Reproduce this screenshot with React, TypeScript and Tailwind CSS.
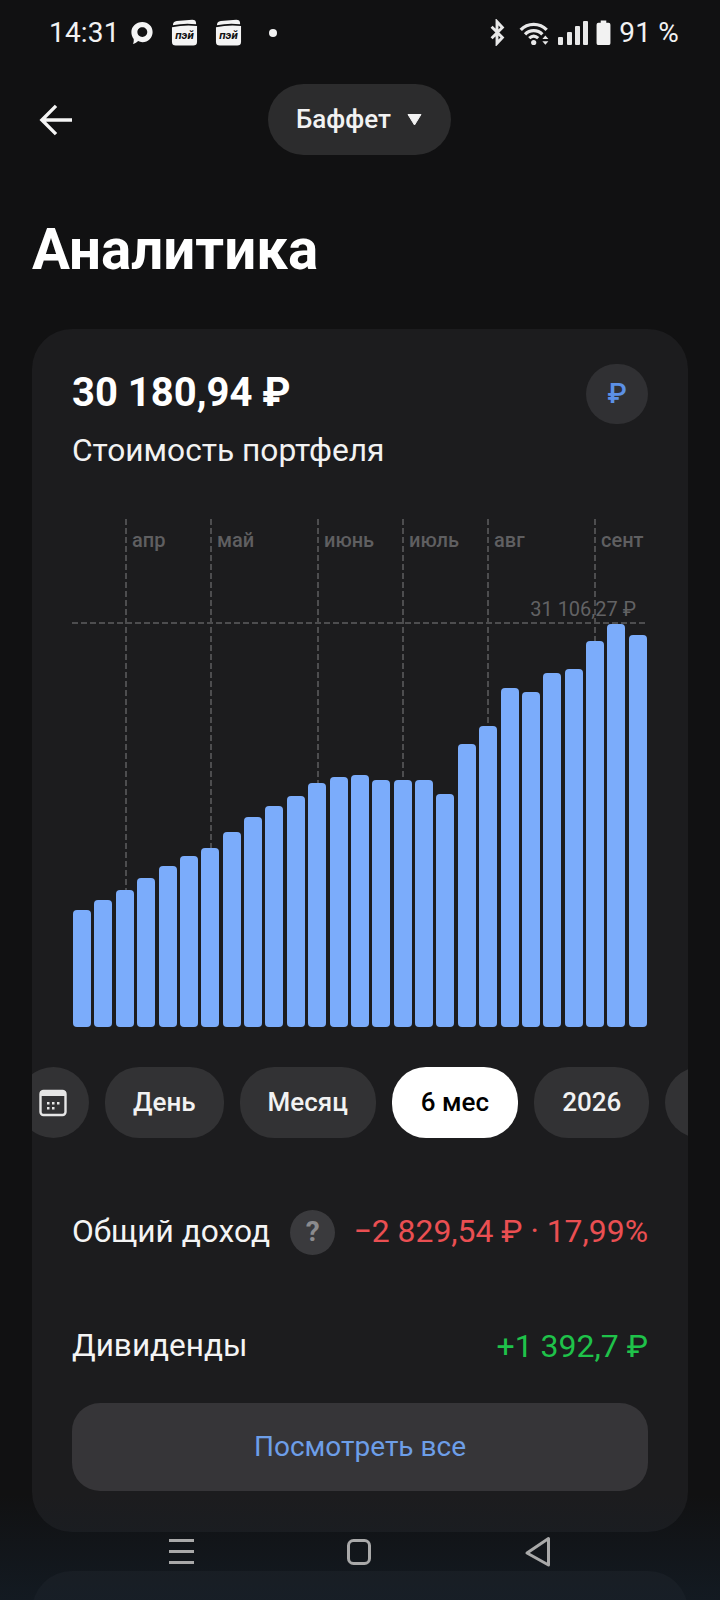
import React from "react";

const tops = [870,840,808,774,738,706,683,636,591,557,528,487,471,464,480,480,480,520,370,318,203,214,158,145,63,10,45];
const vlines = [
  { x: 53, label: "апр" },
  { x: 138, label: "май" },
  { x: 245, label: "июнь" },
  { x: 330, label: "июль" },
  { x: 415, label: "авг" },
  { x: 522, label: "сент" },
];

function Pei() {
  return (
    <svg width="27" height="27" viewBox="0 0 28 27" className="block">
      <path d="M2 6 Q2 2 6 1.600 L22 0.400 Q26 0.400 26 4 L26 5 Q14 3.500 2 6Z" fill="#f4f4f4" />
      <path d="M1 8 Q14 5.500 27 6.800 L27 23 Q27 27 23 27 L5 27 Q1 27 1 23Z" fill="#f4f4f4" />
      <text x="14" y="20" textAnchor="middle" fontSize="12" fontWeight="700" fontStyle="italic" fill="#111" fontFamily="Roboto, sans-serif">пэй</text>
    </svg>
  );
}

function StatusBar() {
  return (
    <div className="flex h-[64px] items-center justify-between pl-[49px] pr-[41px] pt-[1px] text-[#f2f2f2]">
      <div className="flex items-center">
        <span className="text-[28px] font-normal leading-none tracking-[0.2px]">14:31</span>
        <svg width="24" height="24" viewBox="0 0 25 26" className="ml-[10px]">
          <path fillRule="evenodd" fill="#f4f4f4" d="M12.800 1C19.200 1 24 5.700 24 11.900 24 18.200 19.200 23 13 23c-1.900 0-3.400-.4-4.700-1.200-.9.900-3.400 2.800-5.700 3 .9-1.300 1.100-3.300.9-5.300C1.900 17.500 1 14.900 1 12 1 5.700 6.200 1 12.800 1ZM12.800 6.700c-3 0-5.300 2.300-5.300 5.200 0 3 2.300 5.300 5.400 5.300 3 0 5.300-2.300 5.300-5.300 0-2.900-2.400-5.200-5.400-5.200Z" />
        </svg>
        <span className="ml-[17px]"><Pei /></span>
        <span className="ml-[17px]"><Pei /></span>
        <span className="ml-[27px] h-[8px] w-[8px] rounded-full bg-[#f2f2f2]" />
      </div>
      <div className="flex items-center">
        <svg width="16" height="27" viewBox="0 0 16 30" fill="none" stroke="#e8e8e8" strokeWidth="3.200">
          <path d="M2 8.500 L14 20.500 L8 27 L8 3 L14 9.500 L2 21.500" />
        </svg>
        <svg width="32" height="26" viewBox="0 0 37 30" className="ml-[14px]">
          <path d="M2 11.500 C10 3 24 3 32 11.500" fill="none" stroke="#e8e8e8" strokeWidth="3.800" />
          <path d="M7 16.500 C12.500 11 21.500 11 27 16.500" fill="none" stroke="#e8e8e8" strokeWidth="3.800" />
          <path d="M11.800 21 C15 18 19 18 22.200 21" fill="none" stroke="#e8e8e8" strokeWidth="3.600" />
          <circle cx="17" cy="26" r="3" fill="#e8e8e8" />
          <path d="M27 22 L30.500 18 L34 22Z M27 24.500 L34 24.500 L30.500 28.500Z" fill="#e8e8e8" />
        </svg>
        <div className="ml-[7px] flex h-[24px] items-end gap-[3.300px]">
          <span className="h-[8px] w-[5px] rounded-[1px] bg-[#e8e8e8]" />
          <span className="h-[13px] w-[5px] rounded-[1px] bg-[#e8e8e8]" />
          <span className="h-[19px] w-[5px] rounded-[1px] bg-[#e8e8e8]" />
          <span className="h-[24px] w-[5px] rounded-[1px] bg-[#e8e8e8]" />
        </div>
        <svg width="15" height="25" viewBox="0 0 15 27" className="ml-[8px]">
          <path d="M4.500 0.500h6v2.500h2.500q2 0 2 2v20q0 2-2 2h-11q-2 0-2-2v-20q0-2 2-2h2.500Z" fill="#f2f2f2" />
        </svg>
        <span className="ml-[8px] text-[28px] leading-none tracking-[0.2px]">91 %</span>
      </div>
    </div>
  );
}

function Pill({ children, active }: { children: React.ReactNode; active?: boolean }) {
  return (
    <div
      className={
        active
          ? "flex h-[71px] shrink-0 items-center rounded-[34px] bg-white px-[29px] text-[26px] font-medium text-black"
          : "flex h-[71px] shrink-0 items-center rounded-[34px] bg-[#323234] px-[28px] text-[26px] font-medium text-[#f2f2f2]"
      }
    >
      {children}
    </div>
  );
}

export default function App() {
  return (
    <div className="relative h-[1600px] w-[720px] overflow-hidden bg-[#111112] font-['Roboto',sans-serif] text-white">
      <StatusBar />

      <div className="relative mt-[20px] flex h-[71px] items-center justify-center pr-[2px]">
        <svg width="34" height="32" viewBox="0 0 36 34" className="absolute left-[39px] top-[20px]" fill="none" stroke="#f5f5f5" strokeWidth="3.600">
          <path d="M35 17 H3 M18 2 L3 17 L18 32" />
        </svg>
        <div className="flex h-[71px] w-[183px] items-center justify-center rounded-[36px] bg-[#2c2c2d]">
          <span className="text-[26px] font-medium text-[#f2f2f2]">Баффет</span>
          <svg width="15" height="13" viewBox="0 0 15 13" className="ml-[16px]">
            <path d="M1 1.500 H14 L7.500 12Z" fill="#f2f2f2" stroke="#f2f2f2" strokeLinejoin="round" />
          </svg>
        </div>
      </div>

      <h1 className="mt-[62px] pl-[32px] text-[56.500px] font-bold leading-[66px] text-white">Аналитика</h1>

      <section className="mx-[32px] mt-[46px] h-[1203px] overflow-hidden rounded-[40px] bg-[#1c1c1e] pt-[35px]">
        <div className="flex items-start justify-between px-[40px]">
          <div>
            <div className="flex h-[58px] items-center text-[40px] font-bold leading-none">30 180,94 ₽</div>
            <div className="mt-[11px] text-[31.700px] leading-[36px] text-[#f2f2f2]">Стоимость портфеля</div>
          </div>
          <div className="flex h-[60px] w-[62px] items-center justify-center rounded-full bg-[#303033] text-[28px] font-medium text-[#5c90e6]">₽</div>
        </div>

        <div className="relative mx-[40px] mt-[50px] h-[508px]">
          {vlines.map((v) => (
            <div key={v.x} className="absolute bottom-0 top-0 w-[2px] bg-[repeating-linear-gradient(to_bottom,#4d4d4f_0,#4d4d4f_6px,transparent_6px,transparent_9px)]" style={{ left: v.x }}>
              <span className="absolute left-[7px] top-[9px] text-[20px] font-medium leading-[24px] text-[#5f5f61]">{v.label}</span>
            </div>
          ))}
          <div className="absolute left-0 right-0 top-[103px] h-[2px] bg-[repeating-linear-gradient(to_right,#4d4d4f_0,#4d4d4f_6px,transparent_6px,transparent_9px)]" />
          <span className="absolute right-[12px] top-[78px] text-[20px] leading-[24px] text-[#626264]">31 106,27 ₽</span>
          <div className="absolute inset-x-[1px] bottom-0 flex items-end gap-[3.330px]">
            {tops.map((t, i) => (
              <div key={i} className="flex-1 rounded-[4px] bg-[#7bacfb]" style={{ height: (1220 - t) / 3 }} />
            ))}
          </div>
        </div>

        <div className="-ml-[14px] mt-[40px] flex gap-[16px] overflow-visible">
          <div className="flex h-[71px] w-[71px] shrink-0 items-center justify-end rounded-full bg-[#323234] pr-[22px]">
            <svg width="28" height="28" viewBox="0 0 28 28" fill="none">
              <rect x="1.500" y="2" width="25" height="24" rx="3" stroke="#e6e6e6" strokeWidth="2.400" />
              <rect x="1.500" y="2" width="25" height="5" fill="#e6e6e6" />
              <g fill="#e6e6e6">
                <rect x="8" y="13" width="2.500" height="2.500" /><rect x="13" y="13" width="2.500" height="2.500" /><rect x="18" y="13" width="2.500" height="2.500" />
                <rect x="8" y="18" width="2.500" height="2.500" /><rect x="13" y="18" width="2.500" height="2.500" />
              </g>
            </svg>
          </div>
          <Pill>День</Pill>
          <Pill>Месяц</Pill>
          <Pill active>6 мес</Pill>
          <Pill>2026</Pill>
          <div className="h-[71px] w-[71px] shrink-0 rounded-full bg-[#323234]" />
        </div>

        <div className="mt-[71px] flex h-[46px] items-center px-[40px]">
          <span className="text-[31.700px] text-[#f4f4f4]">Общий доход</span>
          <span className="ml-[20px] flex h-[45px] w-[45px] items-center justify-center rounded-full bg-[#3a3a3d] text-[28px] font-bold text-[#8b8b8e]">?</span>
          <span className="ml-auto text-[31.900px] text-[#ea4f52]">−2 829,54 ₽ · 17,99%</span>
        </div>

        <div className="mt-[68px] flex h-[46px] items-center justify-between px-[40px]">
          <span className="text-[31.500px] text-[#f4f4f4]">Дивиденды</span>
          <span className="text-[32px] text-[#1fc24a]">+1 392,7 ₽</span>
        </div>

        <div className="mx-[40px] mt-[34px] flex h-[88px] items-center justify-center rounded-[28px] bg-[#363538] text-[28px] text-[#6d9ee8]">
          Посмотреть все
        </div>
      </section>

      <div className="mx-[32px] mt-[39px] h-[120px] rounded-[40px] bg-[#1c1c1e]" />

      <div className="absolute inset-x-0 bottom-0 h-[105px] bg-gradient-to-b from-transparent to-[#14202c99]" />
      <div className="absolute inset-x-0 bottom-[32px] flex items-center justify-between pl-[168px] pr-[168px]">
        <svg width="26" height="32" viewBox="0 0 26 32" fill="#a9a9a9">
          <rect x="1" y="3" width="25" height="3" /><rect x="1" y="14" width="25" height="3" /><rect x="1" y="25" width="25" height="3" />
        </svg>
        <svg width="24" height="32" viewBox="0 0 24 32" fill="none" stroke="#a9a9a9" strokeWidth="3">
          <rect x="1.500" y="4.500" width="21" height="23" rx="5" />
        </svg>
        <svg width="28" height="32" viewBox="0 0 28 32" fill="none" stroke="#a9a9a9" strokeWidth="3" strokeLinejoin="round">
          <path d="M24.500 2.500 V29 L3 17Z" />
        </svg>
      </div>
    </div>
  );
}
